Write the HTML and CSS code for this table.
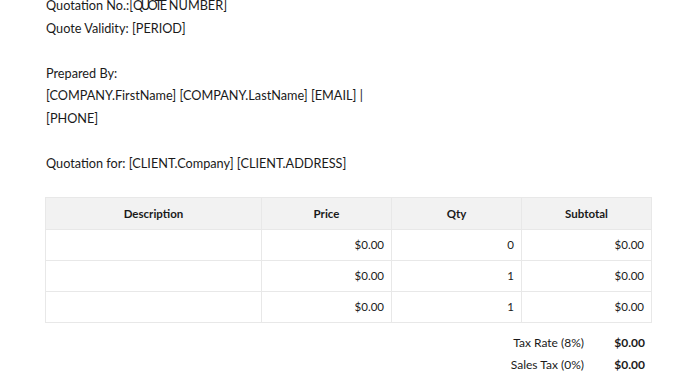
FILE: index.html
```html
<!DOCTYPE html>
<html>
<head>
<meta charset="utf-8">
<link rel="stylesheet" href="styles.css">
</head>
<body>
<div class="page">
  <div class="info">
    <p class="line">Quotation No.:[<span class="squish">QUOTE</span> NUMBER]</p>
    <p class="line">Quote Validity: [PERIOD]</p>
    <p class="line blank">&nbsp;</p>
    <p class="line">Prepared By:</p>
    <p class="line">[COMPANY.FirstName] [COMPANY.LastName] [EMAIL] |</p>
    <p class="line">[PHONE]</p>
    <p class="line blank">&nbsp;</p>
    <p class="line">Quotation for: [CLIENT.Company] [CLIENT.ADDRESS]</p>
  </div>
  <table class="items">
    <thead>
      <tr><th class="c-desc">Description</th><th class="c-price">Price</th><th class="c-qty">Qty</th><th class="c-sub">Subtotal</th></tr>
    </thead>
    <tbody>
      <tr><td></td><td>$0.00</td><td>0</td><td>$0.00</td></tr>
      <tr><td></td><td>$0.00</td><td>1</td><td>$0.00</td></tr>
      <tr><td></td><td>$0.00</td><td>1</td><td>$0.00</td></tr>
    </tbody>
  </table>
  <div class="totals">
    <div class="trow"><span class="tlabel">Tax Rate (8%)</span><span class="tval">$0.00</span></div>
    <div class="trow"><span class="tlabel">Sales Tax (0%)</span><span class="tval">$0.00</span></div>
  </div>
</div>
</body>
</html>
```
FILE: styles.css
```css
html, body {
  margin: 0;
  padding: 0;
  background: #ffffff;
}
body {
  font-family: Lato, "Open Sans", sans-serif;
  color: #1a1a1a;
  font-size: 12.7px;
}
.page {
  padding: 0 48px 0 46px;
  margin-top: -6px;
}
.info {
  display: flex;
  flex-direction: column;
}
.line {
  margin: 0;
  line-height: 22.6px;
  white-space: nowrap;
}
.squish {
  letter-spacing: -2.5px;
  margin-right: 1px;
}
.items {
  margin-top: 22px;
  width: 606px;
  margin-left: -1px;
  border-collapse: collapse;
  table-layout: fixed;
  font-size: 11.5px;
}
.items th, .items td {
  box-sizing: border-box;
  border: 1px solid #e8e8e8;
  height: 31px;
  padding: 0 7px;
}
.items th {
  background: #f2f2f2;
  font-weight: bold;
  text-align: center;
  height: 32px;
}
.items td {
  text-align: right;
}
.c-desc { width: 216px; }
.c-price { width: 130px; }
.c-qty { width: 130px; }
.c-sub { width: 130px; }
.totals {
  display: flex;
  flex-direction: column;
  align-items: flex-end;
  margin-top: 9px;
  padding-right: 7px;
  font-size: 12px;
}
.trow {
  display: flex;
  height: 22px;
  align-items: center;
}
.tlabel {
  width: 100px;
  text-align: right;
}
.tval {
  width: 61px;
  text-align: right;
  font-weight: bold;
}
```
